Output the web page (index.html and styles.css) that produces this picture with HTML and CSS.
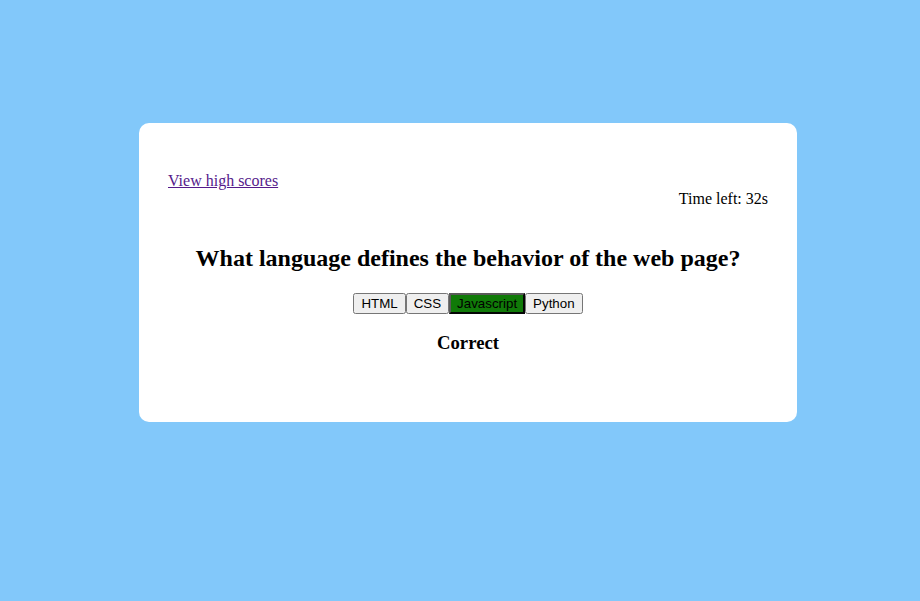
FILE: index.html
```html
<!DOCTYPE html>
<html>
<head>
<meta charset="utf-8">
<link rel="stylesheet" href="styles.css">
</head>
<body>
<main class="page">
  <section class="card">
    <header class="top">
      <div class="scores"><a href="#" class="scores-link">View high scores</a></div>
      <div class="timer">Time left: 32s</div>
    </header>
    <h2 class="question">What language defines the behavior of the web page?</h2>
    <div class="choices"><button class="choice">HTML</button><button class="choice">CSS</button><button class="choice choice-correct">Javascript</button><button class="choice">Python</button></div>
    <h3 class="result">Correct</h3>
  </section>
</main>
</body>
</html>
```

FILE: styles.css
```css
html, body {
  margin: 0;
  padding: 0;
}
body {
  background: #82c8fa;
  font-family: "Liberation Serif", "Times New Roman", serif;
  font-size: 16px;
  color: #000;
  min-height: 601px;
}
.page {
  display: flex;
  justify-content: center;
  padding: 123px 0 0 16px;
}
.card {
  box-sizing: border-box;
  width: 658px;
  height: 299px;
  background: #fff;
  border-radius: 10px;
  padding: 49px 29px 0 29px;
}
.top {
  line-height: 18px;
}
.scores-link {
  color: #551a8b;
}
.timer {
  text-align: right;
}
.question {
  text-align: center;
  font-size: 24px;
  font-weight: bold;
  margin: 36px 0 0 0;
  line-height: 28px;
}
.choices {
  display: flex;
  justify-content: center;
  margin-top: 21px;
}
.choice {
  font-family: "Liberation Sans", Arial, sans-serif;
  font-size: 13.333px;
}
.choice-correct {
  background-color: #107a08;
  border: 2px outset #5a5a5a;
}
.result {
  text-align: center;
  font-size: 18.72px;
  font-weight: bold;
  margin: 18px 0 0 0;
  line-height: 22px;
}
```
